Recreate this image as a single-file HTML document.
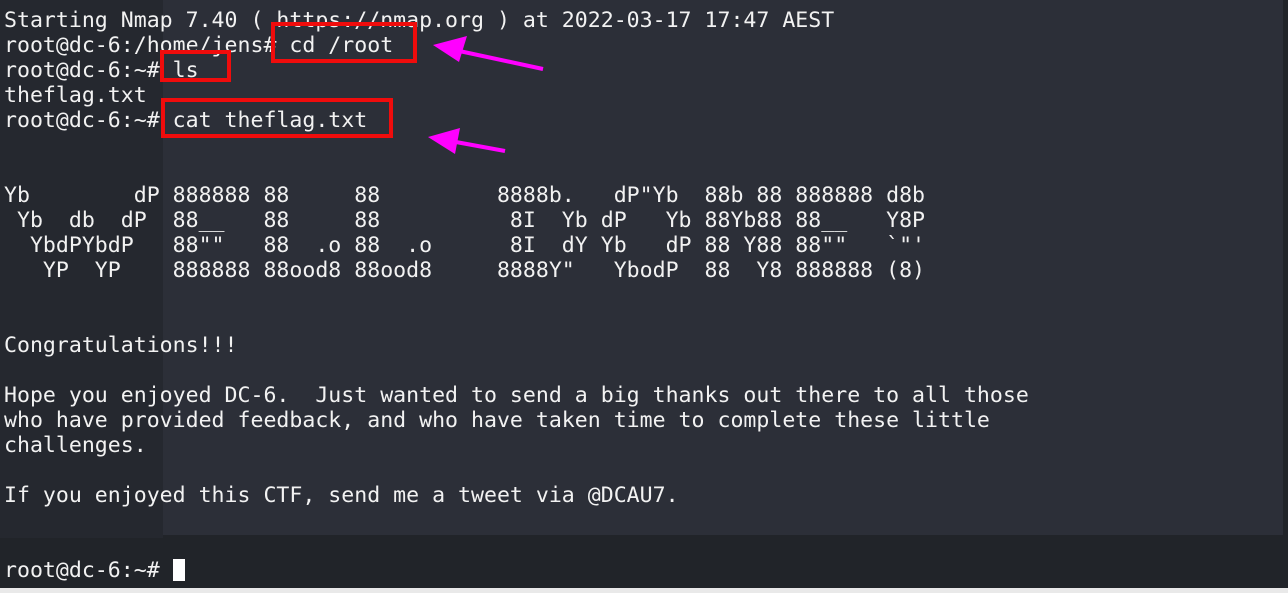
<!DOCTYPE html>
<html><head><style>
html,body{margin:0;padding:0;width:1288px;height:593px;overflow:hidden;background:#212429;}
.main{position:absolute;left:0;top:0;width:1283px;height:535px;background:#2c2f38;}
.left{position:absolute;left:0;top:0;width:163px;height:538px;background:#25282f;}
.bot{position:absolute;left:0;top:588px;width:1288px;height:5px;background:#e9e9e9;}
pre{position:absolute;left:4px;top:8px;margin:0;font-family:"DejaVu Sans Mono","Liberation Mono",monospace;font-size:21.55px;line-height:25px;color:#f2f2f2;white-space:pre;}
.cur{display:inline-block;width:12px;height:22px;background:#fff;vertical-align:-4px;}
.box{position:absolute;border:4px solid #f00c0c;box-sizing:border-box;}
</style></head><body>
<div class="main"></div><div class="left"></div><div class="bot"></div>
<pre>Starting Nmap 7.40 ( https://nmap.org ) at 2022-03-17 17:47 AEST
root@dc-6:/home/jens# cd /root
root@dc-6:~# ls
theflag.txt
root@dc-6:~# cat theflag.txt


Yb        dP 888888 88     88         8888b.   dP"Yb  88b 88 888888 d8b
 Yb  db  dP  88__   88     88          8I  Yb dP   Yb 88Yb88 88__   Y8P
  YbdPYbdP   88""   88  .o 88  .o      8I  dY Yb   dP 88 Y88 88""   `"'
   YP  YP    888888 88ood8 88ood8     8888Y"   YbodP  88  Y8 888888 (8)


Congratulations!!!

Hope you enjoyed DC-6.  Just wanted to send a big thanks out there to all those
who have provided feedback, and who have taken time to complete these little
challenges.

If you enjoyed this CTF, send me a tweet via @DCAU7.


root@dc-6:~# <span class="cur"></span></pre>
<div class="box" style="left:271px;top:22px;width:146px;height:41px"></div>
<div class="box" style="left:160px;top:50px;width:71px;height:32px"></div>
<div class="box" style="left:161px;top:98px;width:232px;height:40px"></div>
<svg style="position:absolute;left:0;top:0" width="1288" height="593">
<line x1="543" y1="69" x2="450" y2="49" stroke="#f0f" stroke-width="4"/>
<polygon points="433,45 467,36 459,62" fill="#f0f"/>
<line x1="505" y1="151" x2="445" y2="140" stroke="#f0f" stroke-width="4"/>
<polygon points="428,137 460,128 455,154" fill="#f0f"/>
</svg>
</body></html>
